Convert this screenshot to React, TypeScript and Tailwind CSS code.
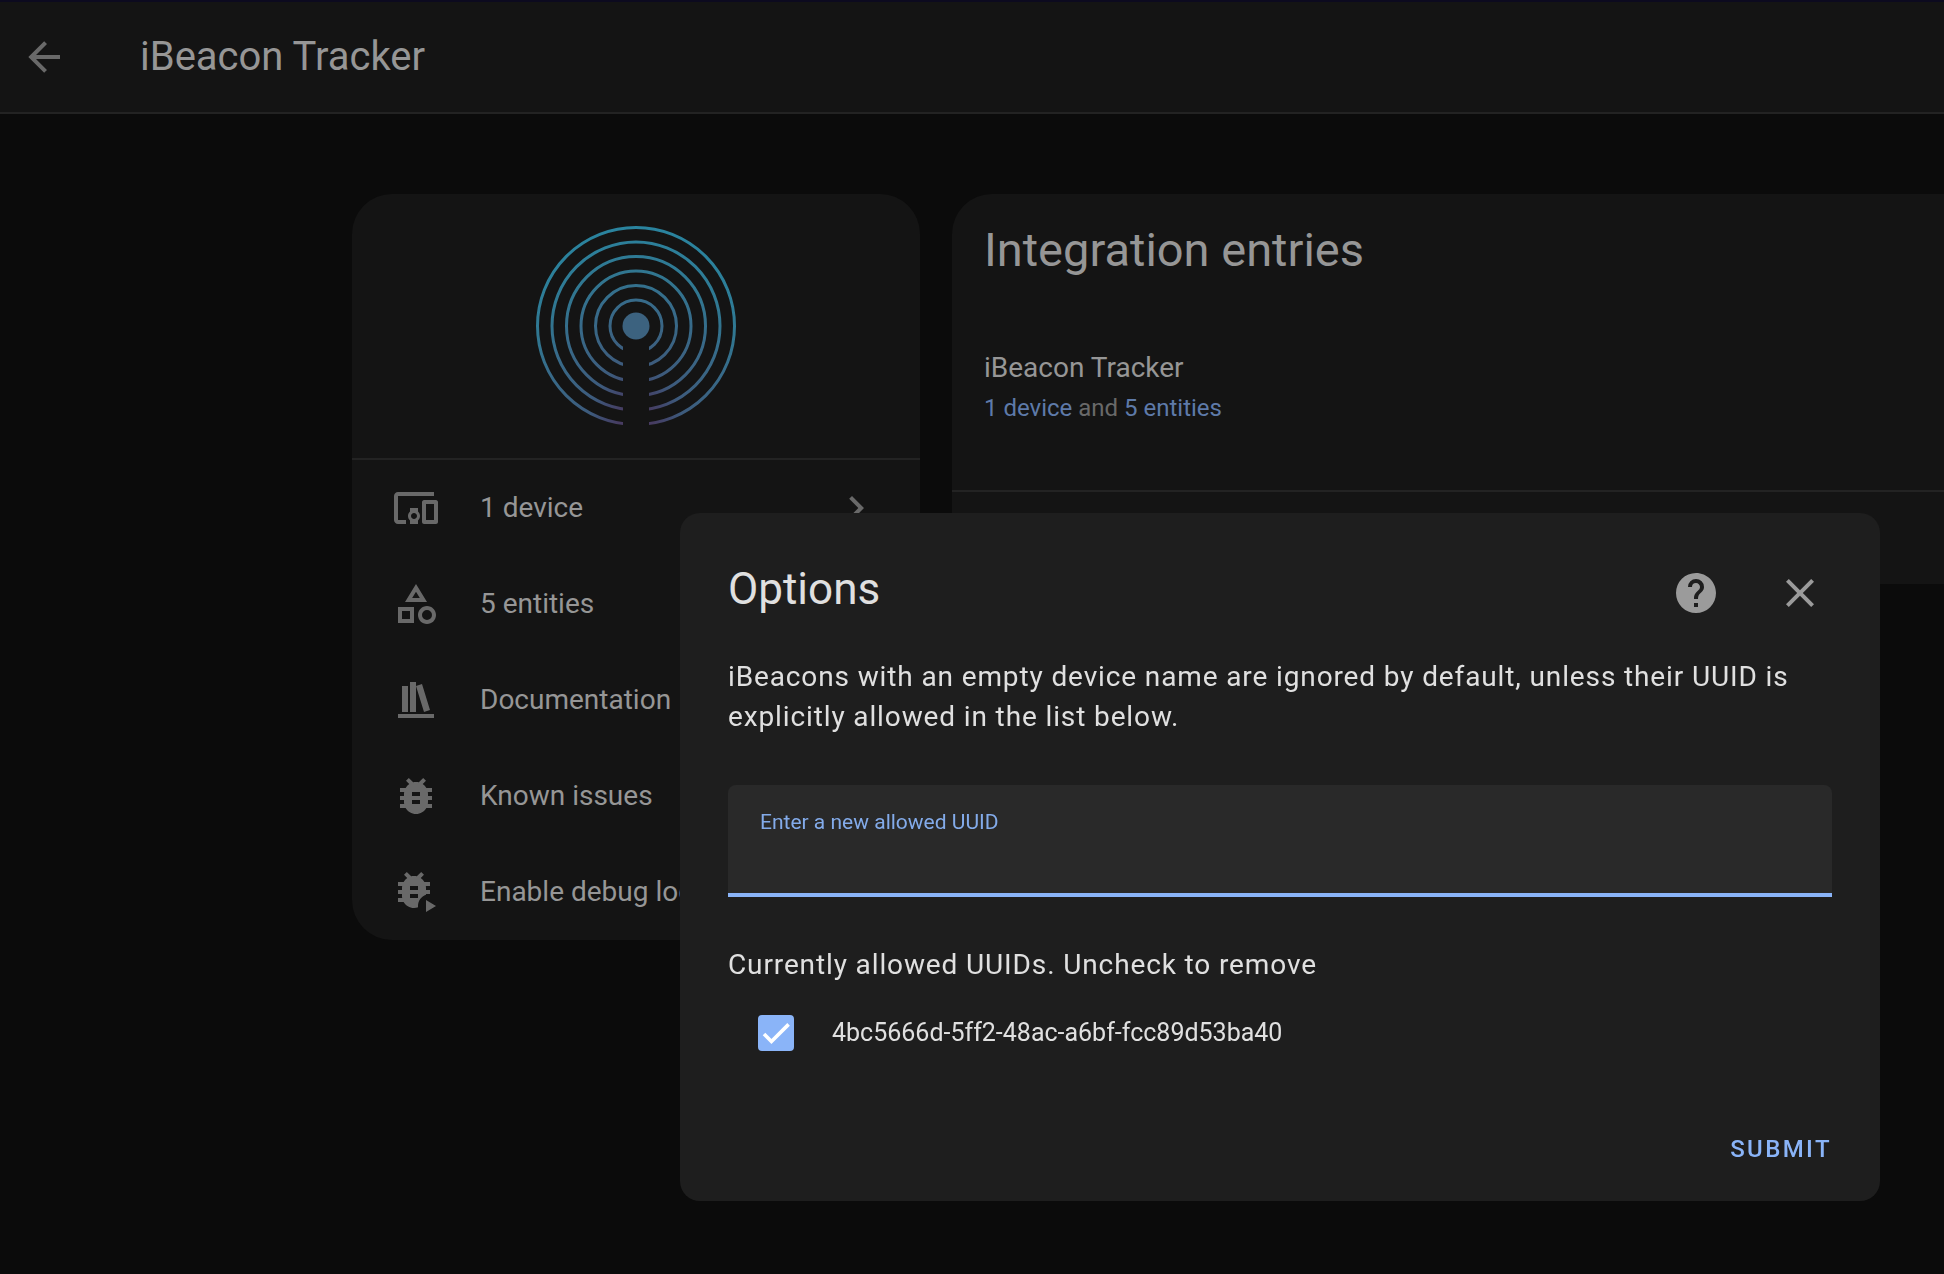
import type { ReactNode } from "react";

const ICONS = {
  back: "M20 11V13H8L13.5 18.5L12.08 19.92L4.16 12L12.08 4.08L13.5 5.5L8 11H20Z",
  devices:
    "M3 6H21V4H3C1.9 4 1 4.9 1 6V18C1 19.1 1.9 20 3 20H7V18H3V6M13 12H9V13.78C8.39 14.33 8 15.11 8 16C8 16.89 8.39 17.67 9 18.22V20H13V18.22C13.61 17.67 14 16.88 14 16S13.61 14.33 13 13.78V12M11 17.5C10.17 17.5 9.5 16.83 9.5 16S10.17 14.5 11 14.5 12.5 15.17 12.5 16 11.83 17.5 11 17.5M22 8H16C15.5 8 15 8.5 15 9V19C15 19.5 15.5 20 16 20H22C22.5 20 23 19.5 23 19V9C23 8.5 22.5 8 22 8M21 18H17V10H21V18Z",
  shapes:
    "M11,13.5V21.5H3V13.5H11M9,15.5H5V19.5H9V15.5M12,2L17.5,11H6.5L12,2M12,5.86L10.08,9H13.92L12,5.86M17.5,13C20,13 22,15 22,17.5C22,20 20,22 17.5,22C15,22 13,20 13,17.5C13,15 15,13 17.5,13M17.5,15A2.5,2.5 0 0,0 15,17.5A2.5,2.5 0 0,0 17.5,20A2.5,2.5 0 0,0 20,17.5A2.5,2.5 0 0,0 17.5,15Z",
  bookshelf: "M9 3V18H12V3H9M12 5L16 18L19 17L15 4L12 5M5 5V18H8V5H5M3 19V21H21V19H3Z",
  bug: "M14,12H10V10H14V12M14,16H10V14H14V16M20,8H17.19C16.74,7.22 16.12,6.55 15.37,6.04L17,4.41L15.59,3L13.42,5.17C12.96,5.06 12.5,5 12,5C11.5,5 11.04,5.06 10.59,5.17L8.41,3L7,4.41L8.62,6.04C7.88,6.55 7.26,7.22 6.81,8H4V10H6.09C6.04,10.33 6,10.66 6,11V12H4V14H6V15C6,15.34 6.04,15.67 6.09,16H4V18H6.81C7.85,19.79 9.78,21 12,21C14.22,21 16.15,19.79 17.19,18H20V16H17.91C17.96,15.67 18,15.34 18,15V14H20V12H18V11C18,10.66 17.96,10.33 17.91,10H20V8Z",
  bugPlay:
    "M19 7H16.19C15.74 6.22 15.12 5.55 14.37 5.04L16 3.41L14.59 2L12.42 4.17C11.96 4.06 11.5 4 11 4C10.5 4 10.04 4.06 9.59 4.17L7.41 2L6 3.41L7.62 5.04C6.88 5.55 6.26 6.22 5.81 7H3V9H5.09C5.04 9.33 5 9.66 5 10V11H3V13H5V14C5 14.34 5.04 14.67 5.09 15H3V17H5.81C6.85 18.79 8.78 20 11 20C11.7 20 12.4 19.88 13.06 19.65C13 19.4 13 19.2 13 19C13 16.4 14.67 14.17 17 13.35V13H19V11H17V10C17 9.66 16.96 9.33 16.91 9H19V7M13 11H9V9H13V11M13 15H9V13H13V15M17 16V22L22 19L17 16Z",
  chevron: "M8.59,16.58L13.17,12L8.59,7.41L10,6L16,12L10,18L8.59,16.58Z",
  help: "M15.07,11.25L14.17,12.17C13.45,12.89 13,13.5 13,15H11V14.5C11,13.39 11.45,12.39 12.17,11.67L13.41,10.41C13.78,10.05 14,9.55 14,9C14,7.89 13.1,7 12,7A2,2 0 0,0 10,9H8A4,4 0 0,1 12,5A4,4 0 0,1 16,9C16,9.88 15.64,10.67 15.07,11.25M13,19H11V17H13M12,2A10,10 0 0,0 2,12A10,10 0 0,0 12,22A10,10 0 0,0 22,12C22,6.47 17.5,2 12,2Z",
  close:
    "M19,6.41L17.59,5L12,10.59L6.41,5L5,6.41L10.59,12L5,17.59L6.41,19L12,13.41L17.59,19L19,17.59L13.41,12L19,6.41Z",
};

function Icon({ name }: { name: keyof typeof ICONS }) {
  return (
    <svg viewBox="0 0 24 24" className="size-12 shrink-0" fill="currentColor" fillRule="evenodd" aria-hidden="true">
      <path d={ICONS[name]} />
    </svg>
  );
}

const RINGS = [98.5, 84, 69.5, 55, 40.5, 26];

function BeaconLogo() {
  return (
    <svg viewBox="0 0 200 200" className="size-50" role="img" aria-label="iBeacon">
      <defs>
        <radialGradient
          id="beacon"
          gradientUnits="userSpaceOnUse"
          cx="0"
          cy="0"
          r="200"
          gradientTransform="translate(100 200) scale(0.77 1)"
        >
          <stop offset="0.06" stopColor="#4a3a62" />
          <stop offset="0.12" stopColor="#463d62" />
          <stop offset="0.2" stopColor="#41486d" />
          <stop offset="0.3" stopColor="#3d5a7c" />
          <stop offset="0.5" stopColor="#3a6483" />
          <stop offset="0.63" stopColor="#376b8a" />
          <stop offset="0.77" stopColor="#317690" />
          <stop offset="1" stopColor="#2a849f" />
        </radialGradient>
        <clipPath id="slot">
          <path d="M0 0H200V200H113V100H87V200H0Z" />
        </clipPath>
      </defs>
      <g clipPath="url(#slot)" fill="none" stroke="url(#beacon)" strokeWidth="3">
        {RINGS.map((r) => (
          <circle key={r} cx="100" cy="100" r={r} />
        ))}
      </g>
      <circle cx="100" cy="100" r="13.5" fill="#3c627f" />
    </svg>
  );
}

function MenuRow({ icon, children, chevron }: { icon: keyof typeof ICONS; children: ReactNode; chevron?: boolean }) {
  return (
    <li>
      <a href="#" className="flex h-24 items-center gap-10 px-10 text-[28px] leading-10">
        <span className="text-[#696969]">
          <Icon name={icon} />
        </span>
        <span className="flex-1 whitespace-nowrap">{children}</span>
        {chevron && (
          <span className="text-[#696969]">
            <Icon name="chevron" />
          </span>
        )}
      </a>
    </li>
  );
}

function OptionsDialog() {
  return (
    <div className="fixed inset-0 flex items-end justify-end pr-16 pb-[73px]">
      <section
        role="dialog"
        aria-labelledby="dialog-title"
        className="w-full max-w-[1200px] rounded-[20px] bg-[#1e1e1e] pt-8 pb-4 text-[#e0e0e0]"
      >
        <header className="flex items-start gap-2 pr-8 pl-12">
          <h2 id="dialog-title" className="flex-1 text-[44px] leading-[88px]">
            Options
          </h2>
          <button type="button" aria-label="Help" className="flex size-24 items-center justify-center text-[#9b9b9b]">
            <Icon name="help" />
          </button>
          <button type="button" aria-label="Close" className="flex size-24 items-center justify-center text-[#9b9b9b]">
            <Icon name="close" />
          </button>
        </header>
        <form className="flex flex-col" onSubmit={(e) => e.preventDefault()}>
          <div className="flex flex-col px-12 pt-4">
            <p className="text-[28px] leading-10 tracking-[0.03125em]">
              iBeacons with an empty device name are ignored by default, unless their UUID is explicitly allowed in the
              list below.
            </p>
            <div className="mt-12 flex h-28 flex-col rounded-t-lg border-b-4 border-[#8ab4f8] bg-[#292929] px-8 pt-5">
              <label htmlFor="uuid" className="text-[21px] leading-[34px] text-[#83abea]">
                Enter a new allowed UUID
              </label>
              <input id="uuid" type="text" className="w-full flex-1 bg-transparent text-[28px] outline-none" />
            </div>
            <p className="mt-12 text-[28px] leading-10 tracking-[0.03125em]">
              Currently allowed UUIDs. Uncheck to remove
            </p>
            <label className="mt-2 flex h-20 items-center gap-[38px] pl-[30px] text-[25px]">
              <span className="grid size-9 place-items-center">
                <input
                  type="checkbox"
                  defaultChecked
                  className="peer col-start-1 row-start-1 size-9 appearance-none rounded-sm border-4 border-[#9b9b9b] checked:border-[#8ab4f8] checked:bg-[#8ab4f8]"
                />
                <svg
                  viewBox="0 0 24 24"
                  className="pointer-events-none invisible col-start-1 row-start-1 size-7 peer-checked:visible"
                  fill="none"
                  stroke="white"
                  strokeWidth="3.12"
                  aria-hidden="true"
                >
                  <path d="M1.73,12.91 8.1,19.28 22.79,4.59" />
                </svg>
              </span>
              4bc5666d-5ff2-48ac-a6bf-fcc89d53ba40
            </label>
          </div>
          <div className="mt-10 flex justify-end px-8">
            <button type="submit" className="h-[72px] px-4 text-[24px] font-medium tracking-widest text-[#8ab4f8]">
              SUBMIT
            </button>
          </div>
        </form>
      </section>
    </div>
  );
}

export default function App() {
  return (
    <div className="min-h-screen overflow-hidden bg-[#0b0b0b] font-['Roboto',sans-serif] text-[#969696]">
      <header className="flex h-[114px] items-center gap-[72px] border-t-2 border-b-2 border-t-[#0c0a1f] border-b-[#232323] bg-[#141414] px-5">
        <button type="button" aria-label="Back" className="text-[#696969]">
          <Icon name="back" />
        </button>
        <h1 className="text-[40px] leading-[48px]">iBeacon Tracker</h1>
      </header>
      <main className="flex items-start gap-8 pt-20 pl-[352px]">
        <section className="w-[568px] shrink-0 rounded-[40px] bg-[#141414]">
          <div className="flex justify-center border-b-2 border-[#232323] py-8">
            <BeaconLogo />
          </div>
          <ul>
            <MenuRow icon="devices" chevron>
              1 device
            </MenuRow>
            <MenuRow icon="shapes">5 entities</MenuRow>
            <MenuRow icon="bookshelf">Documentation</MenuRow>
            <MenuRow icon="bug">Known issues</MenuRow>
            <MenuRow icon="bugPlay">Enable debug logging</MenuRow>
          </ul>
        </section>
        <section className="flex-1 rounded-tl-[40px] rounded-bl-[40px] bg-[#141414]">
          <h2 className="px-8 pt-6 text-[47px] leading-[64px]">Integration entries</h2>
          <div className="border-b-2 border-[#232323] px-8 pt-[66px] pb-[62px]">
            <h3 className="text-[28px] leading-10">iBeacon Tracker</h3>
            <p className="text-[24px] leading-10 text-[#696969]">
              <a href="#" className="text-[#5e7aa9]">
                1 device
              </a>{" "}
              and{" "}
              <a href="#" className="text-[#5e7aa9]">
                5 entities
              </a>
            </p>
          </div>
          <div className="h-[92px]" />
        </section>
      </main>
      <OptionsDialog />
    </div>
  );
}
